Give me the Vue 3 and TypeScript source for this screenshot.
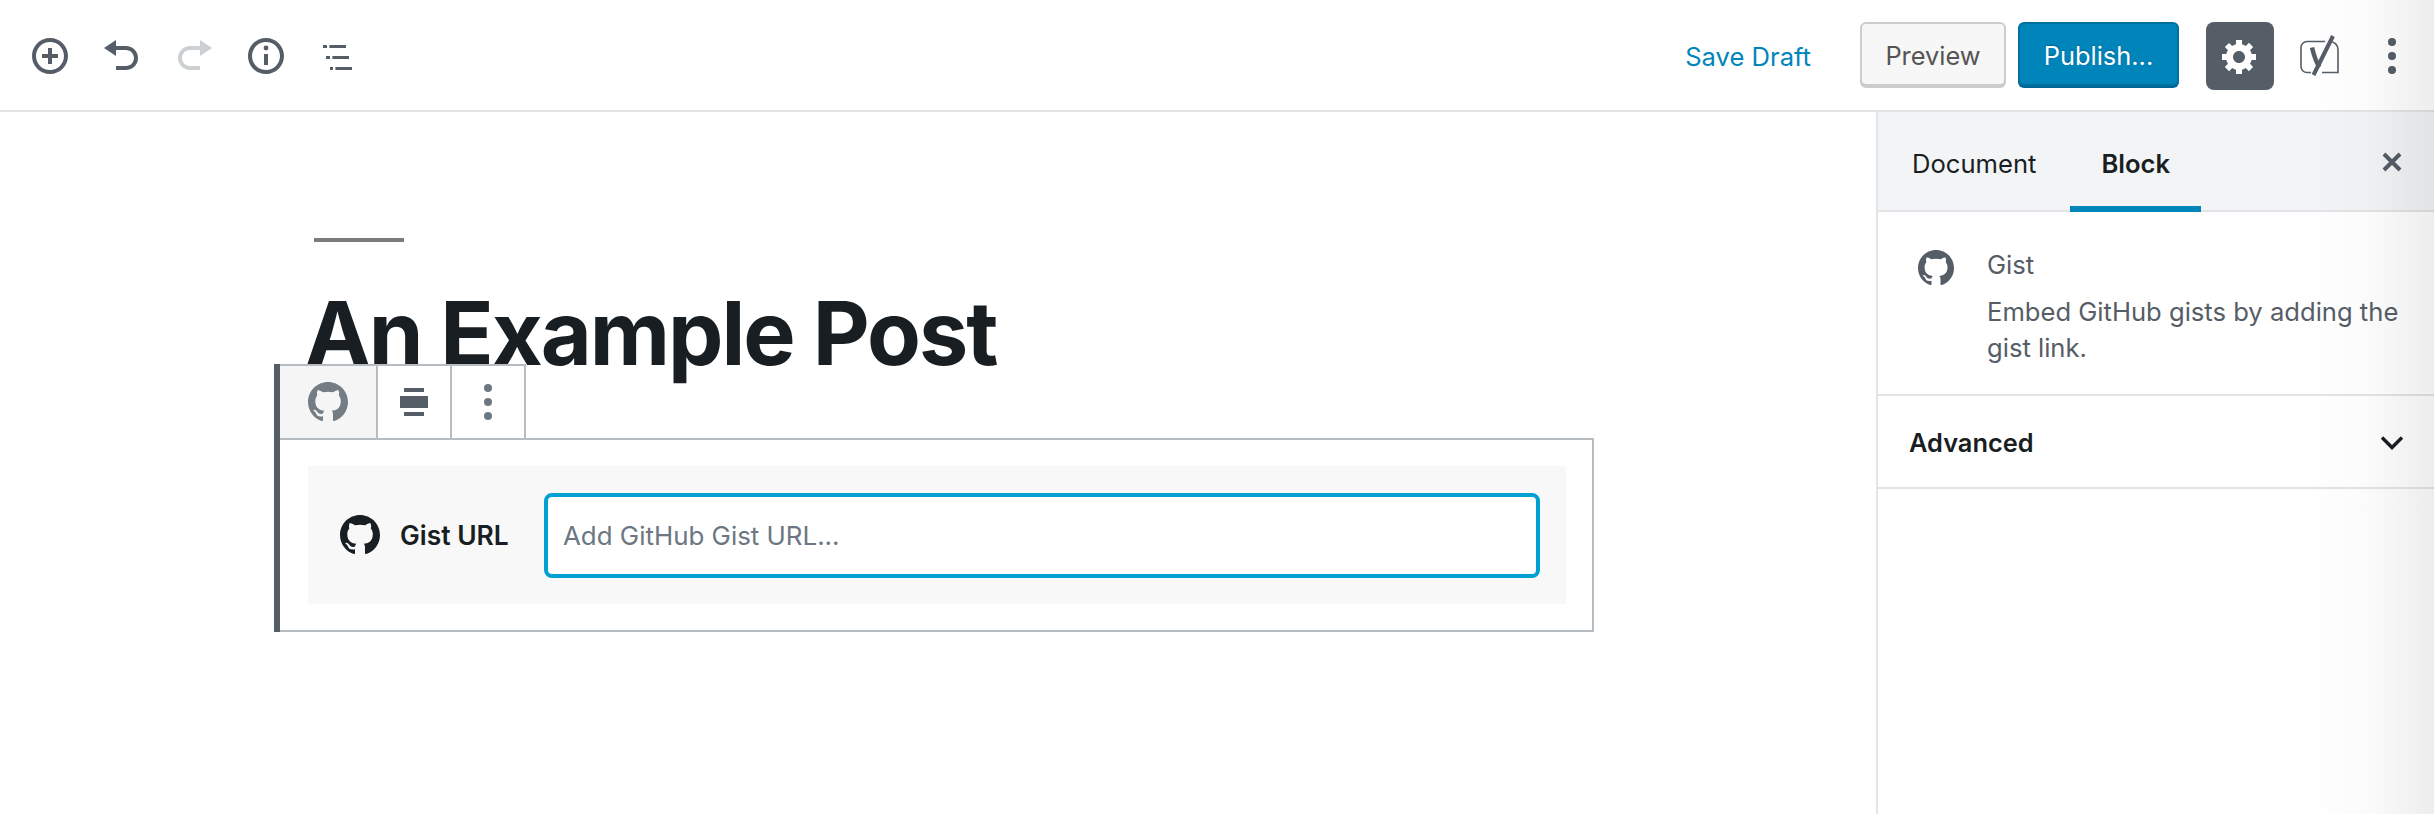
<template>
  <div class="editor">
    <header class="topbar">
      <div class="tools">
        <button v-for="tool in tools" :key="tool.name" class="tool" :class="{ disabled: tool.disabled }" type="button" :aria-label="tool.name">
          <svg viewBox="0 0 20 20" width="40" height="40" fill="currentColor">
            <path v-for="d in tool.paths" :key="d" :d="d" />
          </svg>
        </button>
      </div>

      <div class="actions">
        <a class="save-draft">Save Draft</a>
        <button class="btn preview" type="button">Preview</button>
        <button class="btn publish" type="button">Publish...</button>
        <button class="settings" type="button" aria-label="Settings">
          <svg viewBox="0 0 20 20" width="40" height="40" fill="#fff"><path :d="gearPath" /></svg>
        </button>
        <span class="yoast">
          <svg viewBox="0 0 44 44" width="44" height="44" fill="none" stroke="#555d66">
            <path d="M27 7.500H9a6 6 0 0 0-6 6v19a6 6 0 0 0 6 6h4" stroke-width="1.600" />
            <path d="M32 7.500a8 8 0 0 1 8 8v23H24" stroke-width="1.600" />
            <path d="M14 13.500C16 22 18 28 21.500 33" stroke-width="4.500" />
            <path d="M35 2 15.500 41" stroke-width="4" />
          </svg>
        </span>
        <span class="more">
          <i></i><i></i><i></i>
        </span>
      </div>
    </header>

    <div class="body">
      <main class="content">
        <div class="title-rule"></div>
        <h1 class="post-title">An Example Post</h1>

        <section class="block">
          <div class="block-toolbar">
            <div class="cell cell-first">
              <svg viewBox="0 0 16 16" width="40" height="40" fill="#747c84"><path :d="githubPath" /></svg>
            </div>
            <div class="cell">
              <svg viewBox="0 0 28 28" width="28" height="28" fill="#555d66">
                <rect x="4" y="0" width="20" height="4" />
                <rect x="0" y="8" width="28" height="12" />
                <rect x="4" y="24" width="20" height="4" />
              </svg>
            </div>
            <div class="cell">
              <span class="more small"><i></i><i></i><i></i></span>
            </div>
          </div>

          <div class="block-body">
            <div class="gist-form">
              <svg class="gist-icon" viewBox="0 0 16 16" width="40" height="40" fill="#191e23"><path :d="githubPath" /></svg>
              <label class="gist-label">Gist URL</label>
              <input class="gist-input" type="text" placeholder="Add GitHub Gist URL..." />
            </div>
          </div>
        </section>
      </main>

      <aside class="sidebar">
        <div class="tabs">
          <span class="tab">Document</span>
          <span class="tab active">Block</span>
          <svg class="close" viewBox="0 0 20 20" width="20" height="20" fill="none" stroke="#555d66" stroke-width="4">
            <path d="M2 2l16 16M18 2 2 18" />
          </svg>
        </div>

        <div class="block-card">
          <svg class="card-icon" viewBox="0 0 16 16" width="36" height="36" fill="#555d66"><path :d="githubPath" /></svg>
          <div class="card-text">
            <div class="card-title">Gist</div>
            <p class="card-desc">Embed GitHub gists by adding the gist link.</p>
          </div>
        </div>

        <div class="panel">
          <span>Advanced</span>
          <svg viewBox="0 0 24 16" width="24" height="16" fill="none" stroke="#191e23" stroke-width="3.400">
            <path d="M2 2.500l10 10 10-10" />
          </svg>
        </div>
      </aside>
    </div>

    <div class="edge-shade"></div>
  </div>
</template>

<script setup lang="ts">
interface Tool {
  name: string;
  paths: string[];
  disabled?: boolean;
}

const githubPath =
  'M8 0C3.58 0 0 3.58 0 8c0 3.54 2.29 6.53 5.47 7.59.4.07.55-.17.55-.38 0-.19-.01-.82-.01-1.49-2.01.37-2.53-.49-2.69-.94-.09-.23-.48-.94-.82-1.13-.28-.15-.68-.52-.01-.53.63-.01 1.08.58 1.23.82.72 1.21 1.87.87 2.33.66.07-.52.28-.87.51-1.07-1.78-.2-3.64-.89-3.64-3.95 0-.87.31-1.59.82-2.15-.08-.2-.36-1.02.08-2.12 0 0 .67-.21 2.2.82.64-.18 1.32-.27 2-.27.68 0 1.36.09 2 .27 1.53-1.04 2.2-.82 2.2-.82.44 1.1.16 1.92.08 2.12.51.56.82 1.27.82 2.15 0 3.07-1.87 3.75-3.65 3.95.29.25.54.73.54 1.48 0 1.07-.01 1.93-.01 2.2 0 .21.15.46.55.38A8.013 8.013 0 0016 8c0-4.42-3.58-8-8-8z';

const gearPath =
  'M18 12h-2.180c-.17.7-.44 1.350-.81 1.930l1.540 1.540-2.100 2.100-1.540-1.540c-.58.36-1.230.63-1.910.79V19H8v-2.180c-.68-.16-1.330-.43-1.910-.79l-1.540 1.540-2.120-2.120 1.540-1.540c-.36-.58-.63-1.230-.79-1.910H1V9.030h2.170c.16-.7.44-1.350.8-1.940L2.430 5.550l2.100-2.100 1.540 1.540c.58-.37 1.240-.64 1.930-.81V2h3v2.180c.68.16 1.330.43 1.910.79l1.540-1.540 2.120 2.120-1.540 1.540c.36.59.64 1.240.8 1.940H18V12zm-8.500 1.500c1.660 0 3-1.340 3-3s-1.340-3-3-3-3 1.340-3 3 1.340 3 3 3z';

const ringPath =
  'M10 1c-5 0-9 4-9 9s4 9 9 9 9-4 9-9-4-9-9-9zm0 16c-3.900 0-7-3.100-7-7s3.100-7 7-7 7 3.100 7 7-3.100 7-7 7z';

const tools: Tool[] = [
  { name: 'Add block', paths: [ringPath, 'M11 6H9v3H6v2h3v3h2v-3h3V9h-3V6z'] },
  { name: 'Undo', paths: ['M12 5H7V2L1 6l6 4V7h5c2.200 0 4 1.800 4 4s-1.800 4-4 4H7v2h5c3.300 0 6-2.700 6-6s-2.700-6-6-6z'] },
  { name: 'Redo', disabled: true, paths: ['M8 5h5V2l6 4-6 4V7H8c-2.200 0-4 1.800-4 4s1.800 4 4 4h5v2H8c-3.300 0-6-2.700-6-6s2.700-6 6-6z'] },
  { name: 'Content structure', paths: [ringPath, 'M11 9H9v5.500h2V9zM10 4.800a1.200 1.200 0 1 0 0 2.400 1.200 1.200 0 0 0 0-2.400z'] },
  { name: 'Block navigation', paths: ['M2.500 4.500h2v1.500h-2zM5.700 4.500H14v1.500H5.700zM4 10h2v1.500H4zM7.200 10h8.300v1.500H7.200zM6 15.500h1.500V17H6zM8.700 15.500H17V17H8.700z'] }
];
</script>

<style>
html,
body {
  margin: 0;
  background: #fff;
}
</style>

<style scoped>
.editor {
  position: relative;
  width: 2434px;
  height: 814px;
  overflow: hidden;
  background: #fff;
  font-family: Inter, "Noto Sans", sans-serif;
  color: #191e23;
}

.topbar {
  display: flex;
  align-items: center;
  justify-content: space-between;
  box-sizing: border-box;
  height: 112px;
  padding: 2px 36px 0 14px;
  border-bottom: 2px solid #e2e4e7;
}

.tools {
  display: flex;
}

.tool {
  display: flex;
  align-items: center;
  justify-content: center;
  width: 72px;
  height: 72px;
  padding: 0;
  border: 0;
  background: none;
  color: #555d66;
}

.tool.disabled {
  color: #cdd0d3;
}

.actions {
  display: flex;
  align-items: center;
}

.save-draft {
  margin-right: 49px;
  font-size: 25.6px;
  color: #0085ba;
}

.btn {
  box-sizing: border-box;
  height: 64px;
  margin-bottom: 4px;
  padding: 3px 0 0;
  border-radius: 6px;
  font-family: inherit;
  font-size: 25.4px;
}

.preview {
  width: 146px;
  margin-right: 12px;
  border: 2px solid #ccc;
  box-shadow: 0 2px 0 #ccc;
  background: #f7f7f7;
  color: #555;
}

.publish {
  width: 161px;
  margin-right: 27px;
  border: 2px solid #00719e;
  box-shadow: 0 2px 0 #006799;
  background: #0085ba;
  color: #fff;
  text-shadow: 0 -1px 2px #006799;
}

.settings {
  display: flex;
  align-items: center;
  justify-content: center;
  width: 68px;
  height: 68px;
  padding: 0;
  border: 0;
  border-radius: 8px;
  background: #555d66;
}

.yoast {
  display: flex;
  margin-left: 24px;
  margin-right: 46px;
}

.more {
  display: flex;
  flex-direction: column;
  gap: 6px;
  margin-right: 2px;
}

.more i {
  display: block;
  width: 8px;
  height: 8px;
  border-radius: 50%;
  background: #555d66;
}

.more.small {
  margin: 0;
}

.more.small i {
  background: #6c7781;
}

.body {
  display: flex;
  height: 702px;
}

.content {
  flex: 1;
  padding-left: 274px;
}

.title-rule {
  width: 90px;
  height: 4px;
  margin: 126px 0 0 40px;
  background: #7c7c7c;
}

.post-title {
  margin: 41px 0 -19px 31px;
  font-size: 88px;
  line-height: 100px;
  font-weight: 700;
  letter-spacing: -2px;
  color: #191e23;
}

.block {
  position: relative;
  width: 1320px;
  box-sizing: border-box;
  border-left: 6px solid #555d66;
}

.block-toolbar {
  display: flex;
  width: fit-content;
  border-top: 2px solid #b5bcc2;
}

.cell {
  display: flex;
  align-items: center;
  justify-content: center;
  width: 72px;
  height: 72px;
  border-right: 2px solid #b5bcc2;
  background: #fff;
}

.cell-first {
  width: 96px;
  background: #f5f5f5;
}

.block-body {
  padding: 26px;
  padding-left: 28px;
  border: 2px solid #b5bcc2;
  border-left: 0;
}

.gist-form {
  display: flex;
  align-items: center;
  height: 138px;
  padding: 0 26px 0 32px;
  background: #f8f8f8;
}

.gist-icon {
  flex: none;
  margin-right: 20px;
}

.gist-label {
  width: 144px;
  font-size: 26.4px;
  font-weight: 600;
  color: #191e23;
}

.gist-input {
  flex: 1;
  box-sizing: border-box;
  height: 85px;
  padding: 0 15px;
  border: 4px solid #00a0d2;
  border-radius: 8px;
  outline: none;
  background: #fff;
  font-family: inherit;
  font-size: 25.9px;
}

.gist-input::placeholder {
  color: #6c7781;
  opacity: 1;
}

.sidebar {
  box-sizing: border-box;
  width: 558px;
  border-left: 2px solid #e2e4e7;
}

.tabs {
  position: relative;
  display: flex;
  box-sizing: border-box;
  height: 100px;
  padding-left: 3px;
  border-bottom: 2px solid #e2e4e7;
  background: #f3f4f5;
}

.tab {
  display: flex;
  align-items: center;
  box-sizing: border-box;
  height: 100px;
  padding: 2px 31px 0;
  font-size: 25.6px;
}

.tab.active {
  position: relative;
  margin-left: 3px;
  font-weight: 600;
}

.tab.active::after {
  content: "";
  position: absolute;
  left: 0;
  right: 0;
  bottom: 0;
  height: 6px;
  background: #0085ba;
}

.close {
  position: absolute;
  right: 32px;
  top: 40px;
}

.block-card {
  display: flex;
  box-sizing: border-box;
  height: 184px;
  padding: 38px 30px 0 40px;
  border-bottom: 2px solid #e2e4e7;
  color: #555d66;
  font-size: 25.6px;
}

.card-icon {
  flex: none;
  margin-right: 33px;
}

.card-text {
  margin-top: -3px;
}

.card-title {
  line-height: 36px;
}

.card-desc {
  margin: 11px 0 0;
  line-height: 36px;
}

.panel {
  display: flex;
  align-items: center;
  justify-content: space-between;
  box-sizing: border-box;
  height: 93px;
  padding: 2px 30px 0 31px;
  border-bottom: 2px solid #e2e4e7;
  font-size: 25.4px;
  font-weight: 600;
}

.edge-shade {
  position: absolute;
  top: 0;
  right: 0;
  bottom: 0;
  width: 134px;
  background: linear-gradient(to right, rgba(0, 0, 0, 0), rgba(0, 0, 0, 0.015) 50%, rgba(0, 0, 0, 0.07));
  pointer-events: none;
}
</style>
